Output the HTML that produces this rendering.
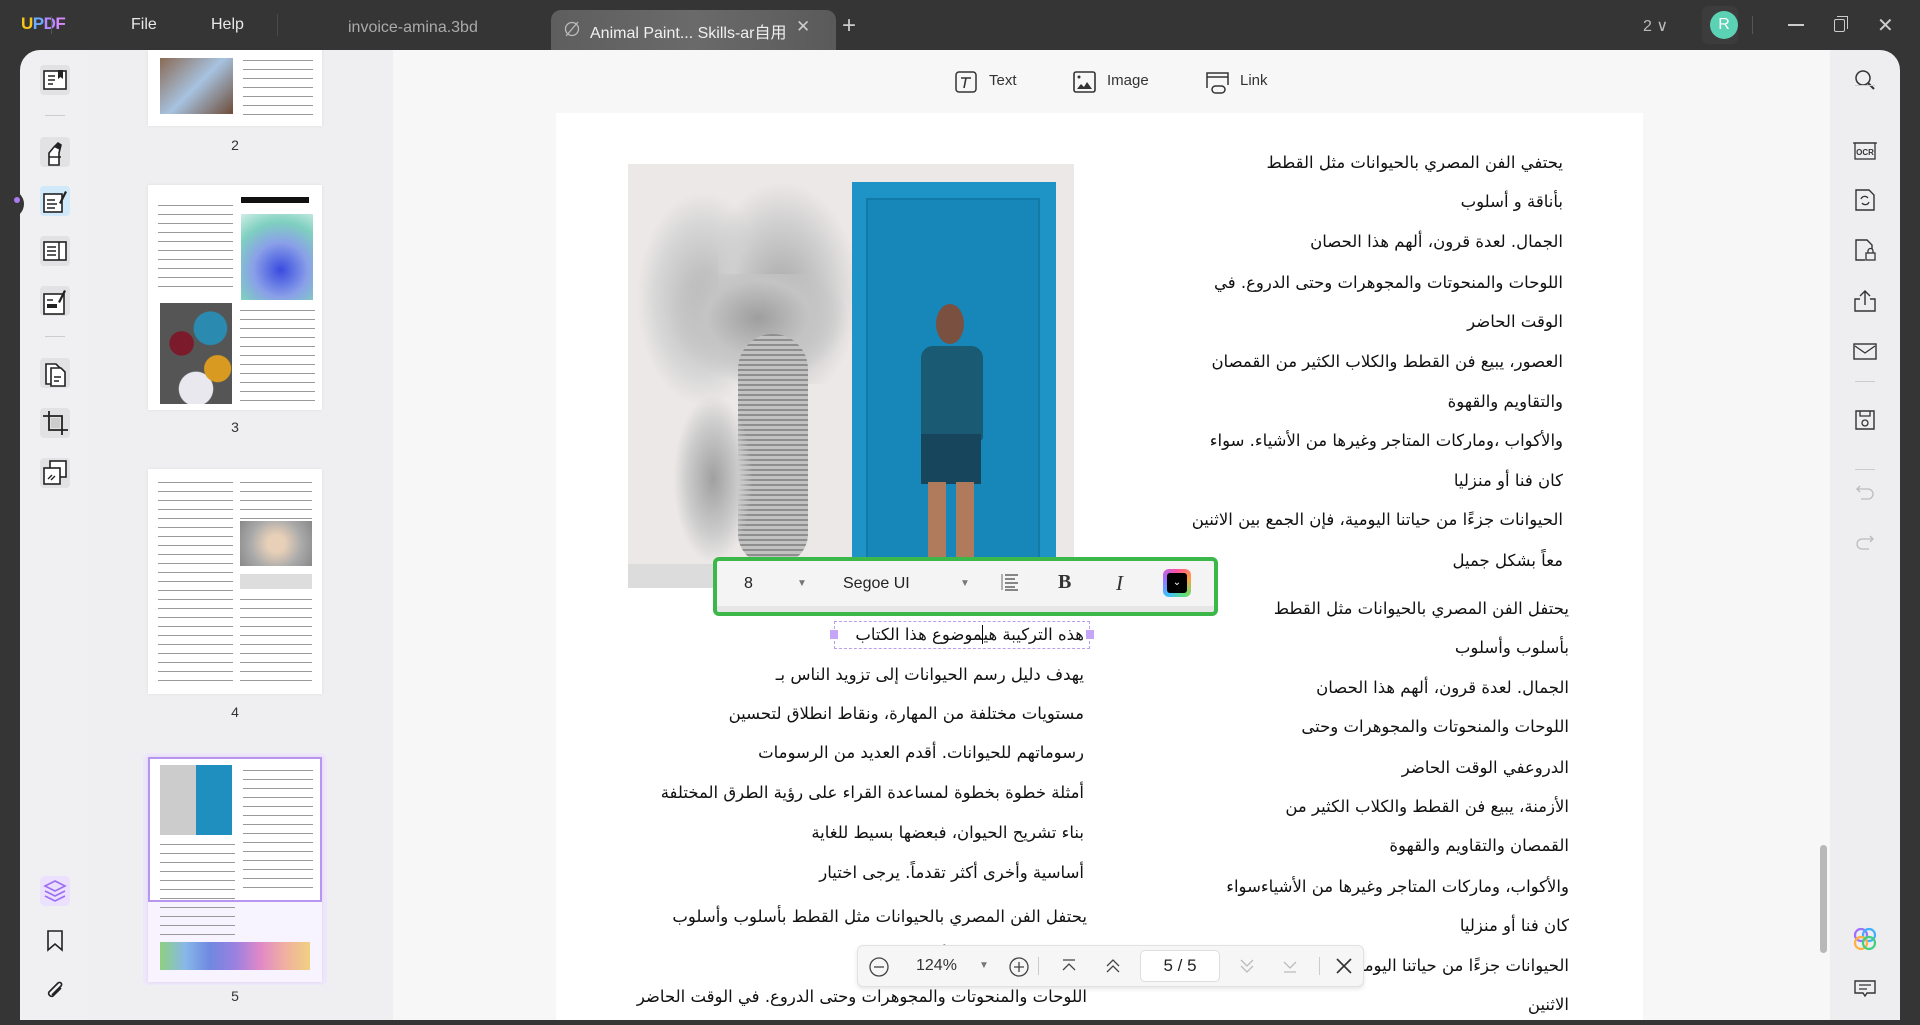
<!DOCTYPE html>
<html><head><meta charset="utf-8"><style>
*{margin:0;padding:0;box-sizing:border-box}
body{width:1920px;height:1020px;overflow:hidden;background:#353535;font-family:"Liberation Sans","DejaVu Sans",sans-serif;position:relative}
.a{position:absolute}
.t{color:#e8e8e8;font-size:16px}
.ar{position:absolute;direction:rtl;font-family:"DejaVu Sans","Liberation Sans",sans-serif;font-size:16.5px;color:#111;white-space:nowrap;line-height:40px;height:40px}
.thumb{position:absolute;left:148px;width:174px;background:#fff;box-shadow:0 0 3px rgba(0,0,0,.08)}
.lines{position:absolute;background:repeating-linear-gradient(#fff 0 5px,#9a9a9a 5px 6px,#fff 6px 9px)}
.num{position:absolute;left:225px;width:20px;text-align:center;font-size:14px;color:#333}
</style></head><body>
<!-- top bar -->
<div class="a" style="left:21px;top:14px;font-size:17px;font-weight:bold;letter-spacing:-0.5px"><span style="color:#f5c518">U</span><span style="color:#6fa8ff">P</span><span style="color:#b48cff">D</span><span style="color:#d889ff">F</span></div>
<div class="a" style="left:51px;top:16px;width:1px;height:18px;background:#555"></div>
<div class="a t" style="left:131px;top:16px">File</div>
<div class="a t" style="left:211px;top:16px">Help</div>
<div class="a" style="left:277px;top:14px;width:1px;height:22px;background:#4a4a4a"></div>
<div class="a" style="left:348px;top:19px;color:#aaa;font-size:16px">invoice-amina.3bd</div>
<div class="a" style="left:551px;top:10px;width:285px;height:40px;border-radius:10px 10px 0 0;background:linear-gradient(90deg,#5e5e5e,#6a6a6a 50%,#5a5a5a)"></div>
<svg class="a" style="left:563px;top:21px" width="18" height="16"><circle cx="9" cy="8" r="6.5" fill="none" stroke="#bbb" stroke-width="1.3"/><path d="M3 15L15 1" stroke="#bbb" stroke-width="1.3"/></svg>
<div class="a" style="left:590px;top:19px;color:#f0f0f0;font-size:16px;font-family:'Liberation Sans','Noto Sans CJK SC',sans-serif">Animal Paint... Skills-ar自用</div>
<div class="a" style="left:796px;top:17px;color:#ccc;font-size:17px">✕</div>
<div class="a" style="left:842px;top:12px;color:#ccc;font-size:24px;font-weight:300">+</div>
<div class="a t" style="left:1643px;top:16px;color:#bbb">2 ∨</div>
<div class="a" style="left:1702px;top:6px;width:36px;height:38px;background:#3c3c3c;border-radius:6px"></div>
<div class="a" style="left:1710px;top:11px;width:28px;height:28px;border-radius:50%;background:#5bd2b4;color:#fff;font-size:16px;text-align:center;line-height:28px">R</div>
<div class="a" style="left:1752px;top:16px;width:1px;height:18px;background:#555"></div>
<div class="a" style="left:1788px;top:24px;width:16px;height:1.5px;background:#ccc"></div>
<div class="a" style="left:1834px;top:19px;width:11px;height:13px;border:1.5px solid #ccc;border-radius:2px"></div>
<div class="a" style="left:1837px;top:16px;width:11px;height:13px;border-top:1.5px solid #ccc;border-right:1.5px solid #ccc"></div>
<div class="a" style="left:1877px;top:13px;color:#ccc;font-size:20px">✕</div>

<!-- left rail -->
<div class="a" style="left:20px;top:50px;width:70px;height:970px;background:#f0f0f2;border-radius:20px 0 0 0"></div>
<div class="a" style="left:88px;top:50px;width:305px;height:970px;background:#efeff1"></div>
<div class="a" style="left:10px;top:190px;width:14px;height:28px;background:#353535;border-radius:0 14px 14px 0"></div>
<div class="a" style="left:14px;top:197px;width:6px;height:6px;border-radius:50%;background:#a87cf0"></div>
<svg class="a" style="left:40px;top:65px" width="30" height="30" viewBox="0 0 30 30"><rect x="0" y="0" width="30" height="30" rx="4" fill="#e2e2e4"/><rect x="4" y="6" width="22" height="18" fill="#fff" stroke="#222" stroke-width="1.6"/><path d="M8 11h7M8 15h7M8 19h5" stroke="#222" stroke-width="1.5"/><path d="M18 5v9l2.5-2 2.5 2V5" fill="#222"/></svg>
<div class="a" style="left:45px;top:115px;width:20px;height:1px;background:#ccc"></div>
<svg class="a" style="left:40px;top:137px" width="30" height="30" viewBox="0 0 30 30"><rect width="30" height="30" rx="4" fill="#e2e2e4"/><path d="M9 28V16l5-6 4-4 3 2-2 8v12z" fill="#fff" stroke="#222" stroke-width="1.6"/><path d="M9 20h12" stroke="#222" stroke-width="1.5"/><path d="M14 10l4-4 3 2-1 5" fill="#222"/></svg>
<svg class="a" style="left:40px;top:186px" width="30" height="30" viewBox="0 0 30 30"><rect width="30" height="30" rx="4" fill="#cfe9fb"/><rect x="4" y="8" width="18" height="18" fill="#fff" stroke="#222" stroke-width="1.6"/><path d="M7 14h8M7 18h10M7 22h8" stroke="#222" stroke-width="1.5"/><path d="M19 17l6-12 2 1-6 12z" fill="#222"/></svg>
<svg class="a" style="left:40px;top:236px" width="30" height="30" viewBox="0 0 30 30"><rect width="30" height="30" rx="4" fill="#e2e2e4"/><rect x="4" y="6" width="22" height="18" fill="#fff" stroke="#222" stroke-width="1.6"/><path d="M7 11h9M7 15h9M7 19h9M19 6v18" stroke="#222" stroke-width="1.5"/></svg>
<svg class="a" style="left:40px;top:286px" width="30" height="30" viewBox="0 0 30 30"><rect width="30" height="30" rx="4" fill="#e2e2e4"/><rect x="4" y="8" width="20" height="20" fill="#fff" stroke="#222" stroke-width="1.6"/><path d="M7 18h10v4H7z" fill="#222"/><path d="M7 14h6" stroke="#222" stroke-width="1.5"/><path d="M18 16l6-12 2 1-6 12z" fill="#222"/></svg>
<div class="a" style="left:45px;top:336px;width:20px;height:1px;background:#ccc"></div>
<svg class="a" style="left:40px;top:358px" width="30" height="30" viewBox="0 0 30 30"><rect width="30" height="30" rx="4" fill="#e2e2e4"/><path d="M6 6h10l4 4v16H6z" fill="#fff" stroke="#222" stroke-width="1.6"/><path d="M11 10h10l4 4v14H11z" fill="#fff" stroke="#222" stroke-width="1.6"/><path d="M14 19h7M14 23h5" stroke="#222" stroke-width="1.4"/></svg>
<svg class="a" style="left:40px;top:408px" width="30" height="30" viewBox="0 0 30 30"><rect width="30" height="30" rx="4" fill="#e2e2e4"/><path d="M9 3v19h19M3 8h19v19" fill="none" stroke="#222" stroke-width="1.8"/><rect x="11" y="10" width="9" height="10" fill="#ccc"/></svg>
<svg class="a" style="left:40px;top:458px" width="30" height="30" viewBox="0 0 30 30"><rect width="30" height="30" rx="4" fill="#e2e2e4"/><rect x="10" y="3" width="16" height="16" fill="#fff" stroke="#222" stroke-width="1.6"/><rect x="4" y="10" width="16" height="16" fill="#fff" stroke="#222" stroke-width="1.6"/><path d="M8 21l4-4M11 22l4-4" stroke="#222" stroke-width="1.4"/></svg>
<svg class="a" style="left:40px;top:876px" width="30" height="30" viewBox="0 0 30 30"><rect width="30" height="30" rx="5" fill="#ece0ff"/><path d="M15 5l10 5-10 5-10-5z M5 15l10 5 10-5 M5 20l10 5 10-5" fill="none" stroke="#9b6df0" stroke-width="1.6"/></svg>
<svg class="a" style="left:46px;top:930px" width="18" height="22"><path d="M2 1h14v19l-7-6-7 6z" fill="none" stroke="#222" stroke-width="1.6"/></svg>
<svg class="a" style="left:44px;top:979px" width="22" height="24"><path d="M17 9l-8 8a3 3 0 01-4-4l9-9a2 2 0 013 3l-9 9" fill="none" stroke="#222" stroke-width="1.6"/></svg>

<!-- thumbnails -->
<div class="thumb" style="top:50px;height:76px"><div class="a" style="left:12px;top:8px;width:73px;height:56px;background:linear-gradient(135deg,#8a6a55,#a7c3e0 50%,#6e4c38)"></div><div class="lines" style="left:95px;top:5px;width:70px;height:62px"></div></div>
<div class="num" style="top:137px">2</div>
<div class="thumb" style="top:185px;height:225px"><div class="a" style="left:93px;top:12px;width:68px;height:6px;background:#111"></div><div class="a" style="left:93px;top:29px;width:72px;height:86px;background:radial-gradient(circle at 55% 65%,#3a4be0,#8aa0e8 40%,#7fd0c0 70%,#cfeee6)"></div><div class="lines" style="left:10px;top:15px;width:75px;height:90px"></div><div class="a" style="left:12px;top:118px;width:72px;height:101px;background:radial-gradient(circle at 30% 40%,#7a1a2a 15%,transparent 16%),radial-gradient(circle at 70% 25%,#2a8ab0 18%,transparent 19%),radial-gradient(circle at 80% 65%,#d89a20 15%,transparent 16%),radial-gradient(circle at 50% 85%,#e8e8ee 18%,transparent 19%),#555"></div><div class="lines" style="left:92px;top:120px;width:75px;height:98px"></div></div>
<div class="num" style="top:419px">3</div>
<div class="thumb" style="top:469px;height:225px"><div class="lines" style="left:10px;top:8px;width:75px;height:210px"></div><div class="lines" style="left:92px;top:8px;width:72px;height:42px"></div><div class="a" style="left:92px;top:52px;width:72px;height:45px;background:radial-gradient(circle,#e8d0b8 20%,#aaa 60%,#888)"></div><div class="a" style="left:92px;top:105px;width:72px;height:15px;background:#ddd"></div><div class="lines" style="left:92px;top:125px;width:72px;height:92px"></div></div>
<div class="num" style="top:704px">4</div>
<div class="a" style="left:143px;top:753px;width:184px;height:232px;background:#eee6fb;border-radius:6px"></div>
<div class="thumb" style="top:757px;height:225px;background:#f8f4ff"><div class="a" style="left:0;top:0;width:174px;height:145px;border:2px solid #b896f0;background:#fff"></div><div class="a" style="left:12px;top:8px;width:72px;height:70px;background:linear-gradient(90deg,#ccc 0 50%,#1f8fc0 50%)"></div><div class="lines" style="left:95px;top:8px;width:70px;height:130px"></div><div class="lines" style="left:12px;top:82px;width:75px;height:100px;background:repeating-linear-gradient(transparent 0 5px,#9a9a9a 5px 6px,transparent 6px 9px)"></div><div class="a" style="left:12px;top:185px;width:150px;height:28px;background:linear-gradient(90deg,#8fd07f,#88b8e8,#6f88e0,#9a80e0,#e088c8,#f0b0a0,#f0d080)"></div></div>
<div class="num" style="top:988px">5</div>

<!-- main -->
<div class="a" style="left:393px;top:50px;width:1437px;height:970px;background:#f7f7f7"></div>
<svg class="a" style="left:953px;top:70px" width="26" height="24"><rect x="3" y="2" width="20" height="20" rx="3" fill="none" stroke="#333" stroke-width="1.5"/><path d="M8 8h10M13 8l-2 10" stroke="#333" stroke-width="1.6"/></svg>
<div class="a" style="left:989px;top:72px;font-size:15px;color:#333">Text</div>
<svg class="a" style="left:1073px;top:70px" width="24" height="24"><rect x="1" y="2" width="21" height="20" rx="2" fill="none" stroke="#333" stroke-width="1.6"/><circle cx="6" cy="7" r="1.5" fill="#333"/><path d="M4 19l4-5 3 3 3-5 5 7z" fill="#333"/></svg>
<div class="a" style="left:1107px;top:72px;font-size:15px;color:#333">Image</div>
<svg class="a" style="left:1205px;top:70px" width="26" height="26"><path d="M2 18V3h21v12M2 7h21" fill="none" stroke="#333" stroke-width="1.5"/><rect x="7" y="16" width="13" height="7" rx="3.5" fill="none" stroke="#333" stroke-width="1.5"/></svg>
<div class="a" style="left:1240px;top:72px;font-size:15px;color:#333">Link</div>

<div class="a" style="left:556px;top:113px;width:1087px;height:907px;background:#fff"></div>
<!-- photo -->
<div class="a" style="left:628px;top:164px;width:446px;height:424px;background:#ece8e7;overflow:hidden">
 <div class="a" style="left:10px;top:30px;width:130px;height:210px;background:radial-gradient(ellipse at 50% 50%,#b5b5b5,#d6d6d6 50%,transparent 72%)"></div>
 <div class="a" style="left:90px;top:20px;width:140px;height:200px;background:radial-gradient(ellipse at 45% 55%,#a9a9a9,#cfcfcf 45%,transparent 72%)"></div>
 <div class="a" style="left:40px;top:110px;width:180px;height:110px;background:radial-gradient(ellipse at 50% 40%,#9e9e9e,#c4c4c4 40%,transparent 70%)"></div>
 <div class="a" style="left:110px;top:170px;width:70px;height:230px;background:repeating-linear-gradient(#8e8e8e 0 2px,#c2c2c2 2px 5px);border-radius:35px 35px 30px 30px"></div>
 <div class="a" style="left:45px;top:230px;width:80px;height:170px;background:radial-gradient(ellipse at 50% 50%,#a0a0a0,#cbcbcb 45%,transparent 70%)"></div>
 <div class="a" style="left:0;top:400px;width:220px;height:24px;background:#dcdcdc"></div>
 <div class="a" style="left:224px;top:18px;width:204px;height:406px;background:#1e94c6"></div>
 <div class="a" style="left:238px;top:34px;width:174px;height:390px;background:#1786b8;border:2px solid #127aa8"></div>
 <div class="a" style="left:308px;top:140px;width:28px;height:40px;border-radius:50%;background:#7a5040"></div>
 <div class="a" style="left:293px;top:182px;width:62px;height:95px;background:#1b5a73;border-radius:12px 12px 4px 4px"></div>
 <div class="a" style="left:293px;top:270px;width:60px;height:50px;background:#17465c"></div>
 <div class="a" style="left:300px;top:318px;width:18px;height:106px;background:#b07a5c"></div>
 <div class="a" style="left:328px;top:318px;width:18px;height:106px;background:#b07a5c"></div>
</div>

<!-- right column -->
<div class="ar" style="right:357px;top:143px">يحتفي الفن المصري بالحيوانات مثل القطط</div>
<div class="ar" style="right:357px;top:182px">بأناقة و أسلوب</div>
<div class="ar" style="right:357px;top:222px">الجمال. لعدة قرون، ألهم هذا الحصان</div>
<div class="ar" style="right:357px;top:263px">اللوحات والمنحوتات والمجوهرات وحتى الدروع. في</div>
<div class="ar" style="right:357px;top:302px">الوقت الحاضر</div>
<div class="ar" style="right:357px;top:342px">العصور، يبيع فن القطط والكلاب الكثير من القمصان</div>
<div class="ar" style="right:357px;top:382px">والتقاويم والقهوة</div>
<div class="ar" style="right:357px;top:421px">والأكواب ،وماركات المتاجر وغيرها من الأشياء. سواء</div>
<div class="ar" style="right:357px;top:461px">كان فنا أو منزليا</div>
<div class="ar" style="right:357px;top:500px">الحيوانات جزءًا من حياتنا اليومية، فإن الجمع بين الاثنين</div>
<div class="ar" style="right:357px;top:541px">معاً بشكل جميل</div>
<div class="ar" style="right:351px;top:589px">يحتفل الفن المصري بالحيوانات مثل القطط</div>
<div class="ar" style="right:351px;top:628px">بأسلوب وأسلوب</div>
<div class="ar" style="right:351px;top:668px">الجمال. لعدة قرون، ألهم هذا الحصان</div>
<div class="ar" style="right:351px;top:707px">اللوحات والمنحوتات والمجوهرات وحتى</div>
<div class="ar" style="right:351px;top:748px">الدروعفي الوقت الحاضر</div>
<div class="ar" style="right:351px;top:787px">الأزمنة، يبيع فن القطط والكلاب الكثير من</div>
<div class="ar" style="right:351px;top:826px">القمصان والتقاويم والقهوة</div>
<div class="ar" style="right:351px;top:867px">والأكواب، وماركات المتاجر وغيرها من الأشياءسواء</div>
<div class="ar" style="right:351px;top:906px">كان فنا أو منزليا</div>
<div class="ar" style="right:351px;top:946px">الحيوانات جزءًا من حياتنا اليومية</div>
<div class="ar" style="right:351px;top:985px">الاثنين</div>
<!-- left column -->
<div class="ar" style="right:836px;top:655px">يهدف دليل رسم الحيوانات إلى تزويد الناس بـ</div>
<div class="ar" style="right:836px;top:694px">مستويات مختلفة من المهارة، ونقاط انطلاق لتحسين</div>
<div class="ar" style="right:836px;top:733px">رسوماتهم للحيوانات. أقدم العديد من الرسومات</div>
<div class="ar" style="right:836px;top:773px">أمثلة خطوة بخطوة لمساعدة القراء على رؤية الطرق المختلفة</div>
<div class="ar" style="right:836px;top:813px">بناء تشريح الحيوان، فبعضها بسيط للغاية</div>
<div class="ar" style="right:836px;top:853px">أساسية وأخرى أكثر تقدماً. يرجى اختيار</div>
<div class="ar" style="right:833px;top:897px">يحتفل الفن المصري بالحيوانات مثل القطط بأسلوب وأسلوب</div>
<div class="ar" style="right:833px;top:936px">الجمال. لعدة قرون، ألهم هذا</div>
<div class="ar" style="right:833px;top:977px">اللوحات والمنحوتات والمجوهرات وحتى الدروع. في الوقت الحاضر</div>

<!-- selected text -->
<div class="a" style="left:834px;top:621px;width:256px;height:28px;border:1px dashed #b9a0ee"></div>
<div class="a" style="left:830px;top:630px;width:8px;height:9px;background:#c6a4f8"></div>
<div class="a" style="left:1086px;top:630px;width:8px;height:9px;background:#c6a4f8"></div>
<div class="ar" style="right:836px;top:615px">هذه التركيبة هي<span style="border-left:1.5px solid #000"></span>موضوع هذا الكتاب</div>

<!-- format toolbar -->
<div class="a" style="left:713px;top:557px;width:505px;height:59px;border:4px solid #3cb84a;border-radius:6px;background:#f4f4f4;box-shadow:inset 0 -6px 0 #e6e6e6"></div>
<div class="a" style="left:744px;top:575px;font-size:16px;color:#222">8</div>
<div class="a" style="left:797px;top:578px;font-size:10px;color:#777">▼</div>
<div class="a" style="left:843px;top:575px;font-size:16px;color:#222">Segoe UI</div>
<div class="a" style="left:960px;top:578px;font-size:10px;color:#777">▼</div>
<svg class="a" style="left:1000px;top:572px" width="20" height="20"><path d="M2 2v16" stroke="#999" stroke-width="1.5"/><path d="M5 3h13M5 7h10M5 11h13M5 15h10M5 18h13" stroke="#444" stroke-width="1.3"/></svg>
<div class="a" style="left:1058px;top:571px;font-size:20px;font-weight:bold;font-family:'Liberation Serif',serif;color:#333">B</div>
<div class="a" style="left:1116px;top:571px;font-size:21px;font-style:italic;font-family:'Liberation Serif',serif;color:#333">I</div>
<div class="a" style="left:1163px;top:569px;width:28px;height:28px;border-radius:6px;background:conic-gradient(#ff4fa0,#ffa040,#60e070,#40c0ff,#a070ff,#ff4fa0)"></div>
<div class="a" style="left:1167px;top:573px;width:20px;height:20px;border-radius:3px;background:#000;color:#fff;font-size:10px;text-align:center;line-height:20px">⌄</div>

<!-- zoom bar -->
<div class="a" style="left:857px;top:945px;width:507px;height:42px;background:#f6f6f6;border:1px solid #e2e2e2;border-radius:6px;box-shadow:0 2px 4px rgba(0,0,0,.1)"></div>
<svg class="a" style="left:868px;top:956px" width="22" height="22"><circle cx="11" cy="11" r="9" fill="none" stroke="#444" stroke-width="1.3"/><path d="M6 11h10" stroke="#444" stroke-width="1.3"/></svg>
<div class="a" style="left:916px;top:957px;font-size:16px;color:#333">124%</div>
<div class="a" style="left:979px;top:960px;font-size:10px;color:#777">▼</div>
<svg class="a" style="left:1008px;top:956px" width="22" height="22"><circle cx="11" cy="11" r="9" fill="none" stroke="#444" stroke-width="1.3"/><path d="M6 11h10M11 6v10" stroke="#444" stroke-width="1.3"/></svg>
<div class="a" style="left:1038px;top:957px;width:1px;height:18px;background:#ccc"></div>
<svg class="a" style="left:1060px;top:958px" width="18" height="16"><path d="M3 2h12M3 12l6-6 6 6" fill="none" stroke="#444" stroke-width="1.3"/></svg>
<svg class="a" style="left:1104px;top:958px" width="18" height="16"><path d="M3 8l6-6 6 6M3 14l6-6 6 6" fill="none" stroke="#444" stroke-width="1.3"/></svg>
<div class="a" style="left:1140px;top:950px;width:80px;height:32px;background:#fff;border:1px solid #ddd;border-radius:5px;text-align:center;line-height:30px;font-size:17px;color:#222">5 / 5</div>
<svg class="a" style="left:1238px;top:958px" width="18" height="16"><path d="M3 2l6 6 6-6M3 8l6 6 6-6" fill="none" stroke="#bbb" stroke-width="1.3"/></svg>
<svg class="a" style="left:1281px;top:958px" width="18" height="16"><path d="M3 4l6 6 6-6M3 14h12" fill="none" stroke="#bbb" stroke-width="1.3"/></svg>
<div class="a" style="left:1319px;top:957px;width:1px;height:18px;background:#ccc"></div>
<svg class="a" style="left:1334px;top:956px" width="20" height="20"><path d="M3 3l14 14M17 3L3 17" stroke="#333" stroke-width="1.6"/></svg>

<!-- scrollbar -->
<div class="a" style="left:1820px;top:845px;width:7px;height:108px;background:#b8b8b8;border-radius:4px"></div>

<!-- right rail -->
<div class="a" style="left:1830px;top:50px;width:70px;height:970px;background:#eeeef0;border-radius:0 20px 0 0"></div>
<svg class="a" style="left:1853px;top:68px" width="24" height="24"><circle cx="10" cy="10" r="7" fill="none" stroke="#333" stroke-width="1.5"/><path d="M15 15l6 6" stroke="#333" stroke-width="2"/></svg>
<div class="a" style="left:1855px;top:85px;width:20px;height:1px;background:#ccc"></div>
<svg class="a" style="left:1852px;top:139px" width="26" height="24"><path d="M1 4h24" stroke="#333" stroke-width="1.2"/><rect x="3" y="4" width="20" height="16" fill="none" stroke="#333" stroke-width="1.3"/><text x="13" y="16" font-size="8" font-family="Liberation Sans" font-weight="bold" text-anchor="middle" fill="#333">OCR</text></svg>
<svg class="a" style="left:1854px;top:188px" width="22" height="24"><path d="M2 2h13l5 5v15H2z" fill="none" stroke="#333" stroke-width="1.4"/><path d="M7 11a4 4 0 017-1M15 14a4 4 0 01-7 1" fill="none" stroke="#333" stroke-width="1.3"/></svg>
<svg class="a" style="left:1854px;top:238px" width="22" height="24"><path d="M11 22H2V2h11l5 5v4" fill="none" stroke="#333" stroke-width="1.4"/><rect x="12" y="15" width="9" height="7" fill="none" stroke="#333" stroke-width="1.3"/><path d="M14 15v-2a2.5 2.5 0 015 0v2" fill="none" stroke="#333" stroke-width="1.3"/></svg>
<svg class="a" style="left:1853px;top:289px" width="24" height="24"><path d="M7 10H2v12h20V10h-5M12 16V2M7 7l5-5 5 5" fill="none" stroke="#333" stroke-width="1.4"/></svg>
<svg class="a" style="left:1853px;top:342px" width="24" height="20"><rect x="1" y="2" width="22" height="15" fill="none" stroke="#333" stroke-width="1.4"/><path d="M2 4l10 7 10-7" fill="none" stroke="#333" stroke-width="1.3"/></svg>
<div class="a" style="left:1855px;top:381px;width:20px;height:1px;background:#ccc"></div>
<svg class="a" style="left:1854px;top:409px" width="22" height="22"><path d="M2 2h18v18H2z" fill="none" stroke="#333" stroke-width="1.4"/><path d="M6 2v5h10V2" fill="none" stroke="#333" stroke-width="1.3"/><circle cx="11" cy="14" r="3" fill="none" stroke="#333" stroke-width="1.3"/></svg>
<div class="a" style="left:1855px;top:469px;width:20px;height:1px;background:#ccc"></div>
<svg class="a" style="left:1855px;top:484px" width="20" height="16"><path d="M5 2L2 5l3 3M2 5h11a5 5 0 010 10H6" fill="none" stroke="#bbb" stroke-width="1.3"/></svg>
<svg class="a" style="left:1855px;top:534px" width="20" height="16"><path d="M15 2l3 3-3 3M18 5H7a5 5 0 000 10h7" fill="none" stroke="#bbb" stroke-width="1.3"/></svg>
<svg class="a" style="left:1853px;top:927px" width="24" height="24"><circle cx="8" cy="8" r="6" fill="none" stroke="#a070ff" stroke-width="2.2"/><circle cx="16" cy="8" r="6" fill="none" stroke="#40b0ff" stroke-width="2.2"/><circle cx="8" cy="16" r="6" fill="none" stroke="#ffb040" stroke-width="2.2"/><circle cx="16" cy="16" r="6" fill="none" stroke="#40d080" stroke-width="2.2"/></svg>
<svg class="a" style="left:1854px;top:979px" width="22" height="20"><path d="M1 2h20v12H13l-2 3-2-3H1z" fill="none" stroke="#333" stroke-width="1.4"/><path d="M5 6h12M5 10h8" stroke="#333" stroke-width="1.3"/></svg>
</body></html>
